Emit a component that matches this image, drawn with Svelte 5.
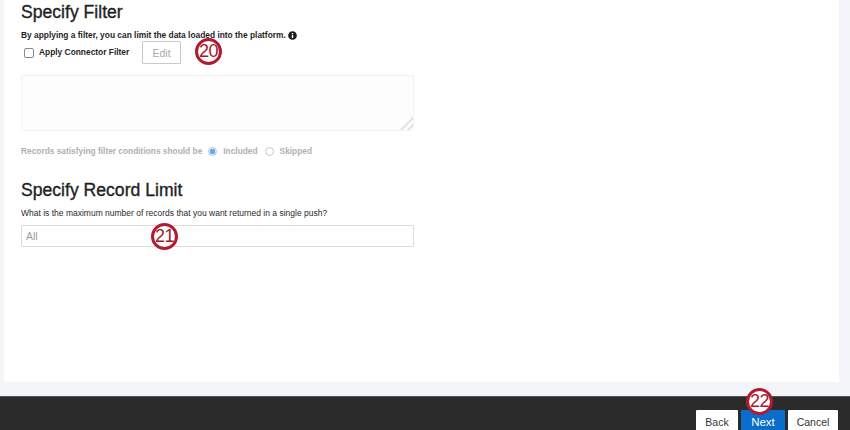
<script>
  let applyFilter = $state(false);
</script>

<main class="page">
  <div class="panel">
    <section class="filter">
      <h2>Specify Filter</h2>
      <p class="intro">
        By applying a filter, you can limit the data loaded into the platform.
        <svg class="info" viewBox="0 0 10 10" aria-hidden="true">
          <circle cx="5" cy="5" r="4.8" fill="#1c1c1c" />
          <rect x="4.2" y="4.3" width="1.6" height="3.4" fill="#fff" />
          <rect x="4.2" y="2.2" width="1.6" height="1.4" fill="#fff" />
        </svg>
      </p>
      <div class="apply-row">
        <label class="apply">
          <input type="checkbox" bind:checked={applyFilter} />
          <span>Apply Connector Filter</span>
        </label>
        <div class="edit-wrap">
          <button class="edit" disabled>Edit</button>
          <span class="badge badge-20">20</span>
        </div>
      </div>
      <textarea class="filter-text" disabled></textarea>
      <div class="records">
        <span>Records satisfying filter conditions should be</span>
        <span class="radio on"></span>
        <span>Included</span>
        <span class="radio off"></span>
        <span>Skipped</span>
      </div>
    </section>

    <section class="limit">
      <h2>Specify Record Limit</h2>
      <p class="question">What is the maximum number of records that you want returned in a single push?</p>
      <div class="limit-field">
        <input type="text" placeholder="All" />
        <span class="badge badge-21">21</span>
      </div>
    </section>
  </div>

  <footer>
    <button class="btn">Back</button>
    <div class="next-wrap">
      <button class="btn next">Next</button>
      <span class="badge badge-22">22</span>
    </div>
    <button class="btn">Cancel</button>
  </footer>
</main>

<style>
  :global(body) {
    margin: 0;
    background: #f4f5f8;
    overflow: hidden;
  }

  .page {
    height: 430px;
    display: flex;
    flex-direction: column;
    font-family: "Liberation Sans", Arial, sans-serif;
    color: #1f1f1f;
    overflow: hidden;
  }

  .panel {
    height: 382px;
    margin: 0 11px 14px 4px;
    padding: 0 17px;
    background: #fff;
    box-sizing: border-box;
    flex: none;
  }

  h2 {
    margin: 0;
    font-size: 17.6px;
    line-height: 22px;
    font-weight: 400;
    -webkit-text-stroke: 0.35px #1f1f1f;
  }

  .filter h2 {
    padding-top: 1px;
  }

  .intro {
    margin: 6px 0 0;
    font-size: 8.4px;
    line-height: 12px;
    font-weight: 700;
    display: flex;
    align-items: center;
    gap: 2px;
  }

  .info {
    width: 9px;
    height: 9px;
  }

  .apply-row {
    display: flex;
    align-items: flex-start;
  }

  .apply {
    display: flex;
    align-items: center;
    gap: 5px;
    padding: 5px 0 0 3px;
    width: 118px;
    height: 12px;
    font-size: 8.4px;
    font-weight: 700;
    line-height: 12px;
  }

  .apply input {
    appearance: none;
    width: 10px;
    height: 10px;
    margin: 1px 0 0;
    border: 1px solid #8a8a8a;
    border-radius: 2px;
    background: #fff;
  }

  .edit-wrap {
    position: relative;
  }

  .edit {
    display: block;
    width: 39px;
    height: 23px;
    padding: 0;
    border: 1px solid #c9c9c9;
    border-radius: 1px;
    background: #fff;
    color: #a9a9a9;
    font: 10.5px "Liberation Sans", Arial, sans-serif;
  }

  .filter-text {
    display: block;
    width: 393px;
    height: 56px;
    margin: 11px 0 0;
    border: 1px solid #f2f2f2;
    border-radius: 2px;
    background: #fdfdfd;
    box-sizing: border-box;
  }

  .filter-text::-webkit-resizer {
    background: linear-gradient(135deg, transparent 55%, #e4e4e4 55% 65%, transparent 65% 78%, #e4e4e4 78% 88%, transparent 88%);
  }

  .records {
    display: flex;
    align-items: center;
    margin-top: 14px;
    font-size: 8.35px;
    line-height: 12px;
    font-weight: 700;
    color: #b0b0b0;
  }

  .radio {
    width: 7px;
    height: 7px;
    margin: 0 6px;
    border: 1px solid #c8c8c8;
    border-radius: 50%;
    background: #fff;
  }

  .radio.off {
    margin-left: 7px;
  }

  .radio.on {
    border-color: #a9c8ec;
    background: radial-gradient(circle, #6fa5e6 0 2.5px, #e6f0fb 3px);
  }

  .limit {
    margin-top: 22px;
  }

  .question {
    margin: 6px 0 0;
    font-size: 8.5px;
    line-height: 12px;
    color: #2a2a2a;
  }

  .limit-field {
    position: relative;
    width: 393px;
    margin-top: 6px;
  }

  .limit-field input {
    display: block;
    width: 100%;
    height: 22px;
    padding: 0 4px;
    border: 1px solid #dcdcdc;
    border-radius: 2px;
    box-sizing: border-box;
    background: #fff;
    font: 10.5px "Liberation Sans", Arial, sans-serif;
  }

  .limit-field input::placeholder {
    color: #9a9a9a;
    opacity: 1;
  }

  .badge {
    position: absolute;
    width: 27px;
    height: 27px;
    box-sizing: border-box;
    border: 3px solid #b5192f;
    border-radius: 50%;
    background: #fff;
    color: #a3182b;
    font: 18px/21px "Liberation Sans", Arial, sans-serif;
    letter-spacing: -0.5px;
    text-align: center;
  }

  .badge-20 {
    left: 53px;
    top: -3px;
  }

  .badge-21 {
    left: 130px;
    top: -2px;
  }

  .badge-22 {
    left: 5px;
    top: -22px;
  }

  footer {
    flex: 1;
    display: flex;
    justify-content: flex-end;
    align-items: flex-start;
    gap: 3px;
    padding: 13px 12px 0 0;
    background: #2b2b2b;
    border-top: 1px solid #555;
  }

  .btn {
    display: block;
    height: 24px;
    padding: 0;
    width: 42px;
    border: 0;
    border-radius: 1px 1px 0 0;
    background: #fff;
    color: #333;
    font: 10.5px "Liberation Sans", Arial, sans-serif;
  }

  .btn:last-child {
    width: 50px;
  }

  .next-wrap {
    position: relative;
  }

  .btn.next {
    width: 44px;
    background: #0a6ccb;
    color: #fff;
    font-size: 11.5px;
  }
</style>
